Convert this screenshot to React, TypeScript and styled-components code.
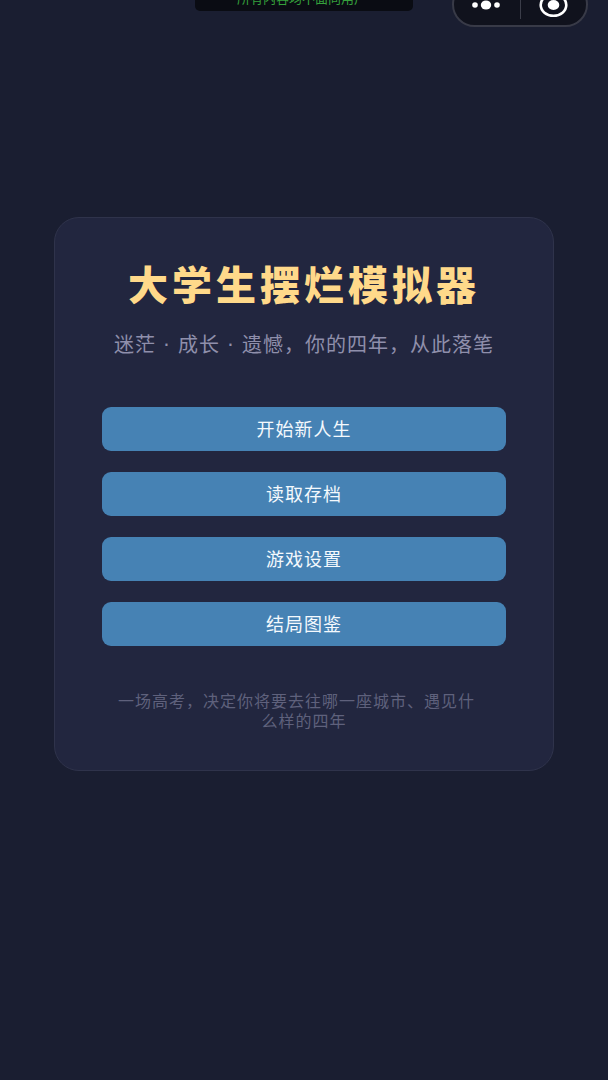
import React from 'react';
import styled, { createGlobalStyle } from 'styled-components';

const GlobalStyle = createGlobalStyle`
  *, *::before, *::after { box-sizing: border-box; }
  body {
    margin: 0;
    background: #1a1e31;
    font-family: "Noto Sans CJK SC", "Noto Sans", sans-serif;
  }
`;

const Page = styled.div`
  position: relative;
  min-height: 100vh;
  padding: 0 54px 92px;
  display: flex;
  flex-direction: column;
  justify-content: center;
  align-items: center;
  overflow: hidden;
`;

const Notice = styled.div`
  position: absolute;
  top: -14px;
  left: 50%;
  width: 218px;
  height: 25px;
  padding-right: 4px;
  transform: translateX(-50%);
  border-radius: 5px;
  background: #0a0c13;
  color: #35a03c;
  font-size: 13px;
  line-height: 24px;
  text-align: center;
  white-space: nowrap;
`;

const Capsule = styled.div`
  position: absolute;
  top: -18px;
  right: 20px;
  width: 136px;
  height: 45px;
  display: flex;
  align-items: center;
  border: 2px solid #383a47;
  border-radius: 23px;
  background: #10121d;
`;

const CapsuleButton = styled.button`
  flex: 1;
  height: 100%;
  padding: 0;
  display: flex;
  align-items: center;
  justify-content: center;
  border: 0;
  background: none;
  color: #fff;
  cursor: pointer;

  svg { display: block; }
`;

const Divider = styled.span`
  width: 1px;
  height: 28px;
  background: #3b3d49;
`;

const Card = styled.main`
  width: 100%;
  max-width: 640px;
  padding: 37px 47px 40px;
  display: flex;
  flex-direction: column;
  border: 1px solid #2f334b;
  border-radius: 25px;
  background: #22263f;
  text-align: center;
`;

const Title = styled.h1`
  margin: 0;
  color: #ffd98a;
  font-size: 40px;
  font-weight: 900;
  line-height: 56px;
  letter-spacing: 4px;
`;

const Subtitle = styled.p`
  margin: 20px 0 0;
  color: #8f8fab;
  font-family: "DejaVu Sans", "Noto Sans CJK SC", sans-serif;
  font-size: 20px;
  line-height: 28px;
  letter-spacing: 1px;
  white-space: nowrap;
`;

const Menu = styled.nav`
  margin-top: 48px;
  display: flex;
  flex-direction: column;
  gap: 21px;
`;

const MenuButton = styled.button`
  width: 100%;
  height: 44px;
  padding: 0 0 2px;
  border: 0;
  border-radius: 9px;
  background: #4682b4;
  color: #f4f9fd;
  font-family: inherit;
  font-size: 18px;
  line-height: 24px;
  letter-spacing: 1px;
  cursor: pointer;
`;

const Hint = styled.p`
  margin: 44px 0 0;
  padding: 0 16px;
  color: #5f617c;
  font-size: 16px;
  line-height: 20px;
  letter-spacing: 1px;
  text-align: left;
  text-align-last: center;
`;

const menuItems = ['开始新人生', '读取存档', '游戏设置', '结局图鉴'];

export default function App() {
  return (
    <>
      <GlobalStyle />
      <Page>
        <Notice>所有内容均不面向用户</Notice>
        <Capsule>
          <CapsuleButton type="button" aria-label="更多">
            <svg width="30" height="12" viewBox="0 0 30 12" fill="currentColor">
              <circle cx="3" cy="6" r="2.8" />
              <ellipse cx="14" cy="6" rx="5.2" ry="4.5" />
              <circle cx="25" cy="6" r="2.8" />
            </svg>
          </CapsuleButton>
          <Divider />
          <CapsuleButton type="button" aria-label="关闭">
            <svg width="30" height="26" viewBox="0 0 30 26">
              <ellipse cx="15.5" cy="13" rx="12.8" ry="10.8" fill="none" stroke="currentColor" strokeWidth="2.6" />
              <ellipse cx="15.5" cy="13" rx="5.8" ry="5" fill="currentColor" />
            </svg>
          </CapsuleButton>
        </Capsule>
        <Card>
          <Title>大学生摆烂模拟器</Title>
          <Subtitle>迷茫 · 成长 · 遗憾，你的四年，从此落笔</Subtitle>
          <Menu>
            {menuItems.map((label) => (
              <MenuButton key={label} type="button">{label}</MenuButton>
            ))}
          </Menu>
          <Hint>一场高考，决定你将要去往哪一座城市、遇见什么样的四年</Hint>
        </Card>
      </Page>
    </>
  );
}
